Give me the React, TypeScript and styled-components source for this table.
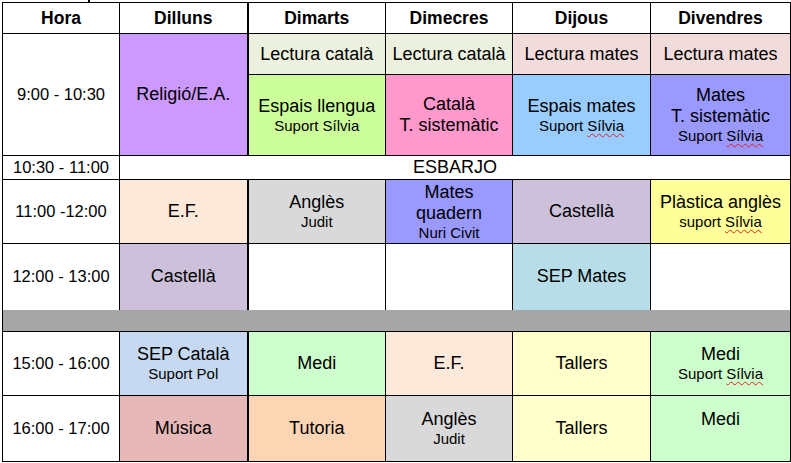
import React from "react"
import styled, { createGlobalStyle } from "styled-components"

const Global = createGlobalStyle`
  body {
    margin: 0;
    background: #fff;
    font-family: "Liberation Sans", Arial, sans-serif;
    color: #000;
  }
`

const Page = styled.div`
  position: relative;
  padding: 2px 0 0 2px;
`

const Tick = styled.span`
  position: absolute;
  left: 88px;
  top: 0;
  width: 2px;
  height: 2px;
  background: #000;
`

const Table = styled.table`
  border-collapse: collapse;
  table-layout: fixed;
  width: 788px;
`

const Row = styled.tr<{ $h: number }>`
  height: ${p => p.$h}px;
`

const Head = styled.th<{ $thick?: boolean }>`
  border: 1px solid #000;
  border-right-width: ${p => (p.$thick ? 2 : 1)}px;
  padding: 0;
  font-size: 17.5px;
  font-weight: bold;
  text-align: center;
  vertical-align: middle;
`

const Time = styled.td<{ $open?: boolean }>`
  border: 1px solid #000;
  border-bottom-style: ${p => (p.$open ? "hidden" : "solid")};
  padding: 0;
  font-size: 16.5px;
  text-align: center;
  vertical-align: middle;
  white-space: nowrap;
`

const Cell = styled.td<{ $bg?: string; $thick?: boolean; $open?: boolean }>`
  border: 1px solid #000;
  border-right-width: ${p => (p.$thick ? 2 : 1)}px;
  border-bottom-style: ${p => (p.$open ? "hidden" : "solid")};
  background: ${p => p.$bg ?? "#fff"};
  padding: 0 2px;
  text-align: center;
  vertical-align: middle;
  font-size: 18px;
  line-height: 21px;
  white-space: nowrap;
`

const Break = styled.td`
  border: 1px solid #000;
  border-top-style: hidden;
  background: #a6a6a6;
  padding: 0;
`

const Line = styled.div`
  font-size: 18px;
  line-height: 21px;
`

const Sub = styled.div`
  font-size: 15px;
  line-height: 18px;
`

const Spell = styled.span`
  text-decoration: underline wavy #e02020;
  text-decoration-thickness: 1px;
  text-underline-offset: 2px;
`

const Silvia = () => <Spell>Sílvia</Spell>

export default function App() {
  return (
    <Page>
      <Global />
      <Tick />
      <Table>
        <colgroup>
          <col style={{ width: 117 }} />
          <col style={{ width: 128 }} />
          <col style={{ width: 138 }} />
          <col style={{ width: 127 }} />
          <col style={{ width: 138 }} />
          <col style={{ width: 140 }} />
        </colgroup>
        <tbody>
          <Row $h={31}>
            <Head>Hora</Head>
            <Head $thick>Dilluns</Head>
            <Head>Dimarts</Head>
            <Head>Dimecres</Head>
            <Head>Dijous</Head>
            <Head>Divendres</Head>
          </Row>
          <Row $h={41}>
            <Time rowSpan={2}>9:00 - 10:30</Time>
            <Cell rowSpan={2} $bg="#cc99ff" $thick>Religió/E.A.</Cell>
            <Cell $bg="#ebf1de">Lectura català</Cell>
            <Cell $bg="#ebf1de">Lectura català</Cell>
            <Cell $bg="#f2dcdb">Lectura mates</Cell>
            <Cell $bg="#f2dcdb">Lectura mates</Cell>
          </Row>
          <Row $h={81}>
            <Cell $bg="#ccff99">
              <Line>Espais llengua</Line>
              <Sub>Suport Sílvia</Sub>
            </Cell>
            <Cell $bg="#ff99cc">
              <Line>Català</Line>
              <Line>T. sistemàtic</Line>
            </Cell>
            <Cell $bg="#99ccff">
              <Line>Espais mates</Line>
              <Sub>Suport <Silvia /></Sub>
            </Cell>
            <Cell $bg="#9999ff">
              <Line>Mates</Line>
              <Line>T. sistemàtic</Line>
              <Sub>Suport <Silvia /></Sub>
            </Cell>
          </Row>
          <Row $h={24}>
            <Time>10:30 - 11:00</Time>
            <Cell colSpan={5}>ESBARJO</Cell>
          </Row>
          <Row $h={64}>
            <Time>11:00 -12:00</Time>
            <Cell $bg="#fde9d9" $thick>E.F.</Cell>
            <Cell $bg="#d9d9d9">
              <Line>Anglès</Line>
              <Sub>Judit</Sub>
            </Cell>
            <Cell $bg="#9999ff">
              <Line>Mates</Line>
              <Line>quadern</Line>
              <Sub>Nuri Civit</Sub>
            </Cell>
            <Cell $bg="#ccc0da">Castellà</Cell>
            <Cell $bg="#ffff99">
              <Line>Plàstica anglès</Line>
              <Sub>suport <Silvia /></Sub>
            </Cell>
          </Row>
          <Row $h={66}>
            <Time $open>12:00 - 13:00</Time>
            <Cell $bg="#ccc0da" $thick>Castellà</Cell>
            <Cell $open />
            <Cell $open />
            <Cell $bg="#b7dee8">SEP Mates</Cell>
            <Cell $open />
          </Row>
          <Row $h={22}>
            <Break colSpan={6} />
          </Row>
          <Row $h={64}>
            <Time>15:00 - 16:00</Time>
            <Cell $bg="#c6d9f1" $thick>
              <Line>SEP Català</Line>
              <Sub>Suport Pol</Sub>
            </Cell>
            <Cell $bg="#ccffcc">Medi</Cell>
            <Cell $bg="#fde9d9">E.F.</Cell>
            <Cell $bg="#ffffcc">Tallers</Cell>
            <Cell $bg="#ccffcc">
              <Line>Medi</Line>
              <Sub>Suport <Silvia /></Sub>
            </Cell>
          </Row>
          <Row $h={66}>
            <Time>16:00 - 17:00</Time>
            <Cell $bg="#e6b9b8" $thick>Música</Cell>
            <Cell $bg="#fcd5b5">Tutoria</Cell>
            <Cell $bg="#d9d9d9">
              <Line>Anglès</Line>
              <Sub>Judit</Sub>
            </Cell>
            <Cell $bg="#ffffcc">Tallers</Cell>
            <Cell $bg="#ccffcc">
              <Line>Medi</Line>
              <Sub>&nbsp;</Sub>
            </Cell>
          </Row>
        </tbody>
      </Table>
    </Page>
  )
}
